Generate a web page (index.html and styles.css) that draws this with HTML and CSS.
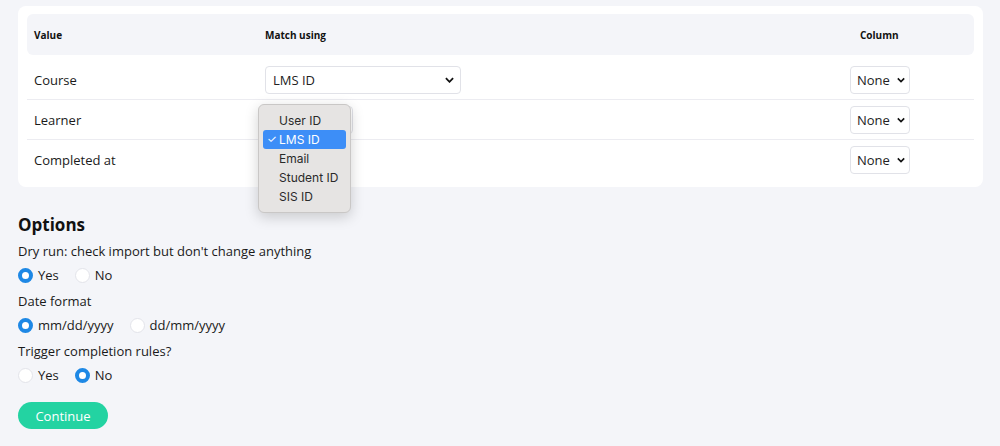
FILE: index.html
```html
<!DOCTYPE html>
<html lang="en">
  <head>
    <meta charset="UTF-8" />
    <title>Import completions</title>
    <link rel="stylesheet" href="styles.css">
  </head>
  <body>
    <div class="card">
      <div class="row head">
        <div class="cell c-value">Value</div>
        <div class="cell c-match">Match using</div>
        <div class="cell c-col">Column</div>
      </div>

      <div class="row first">
        <div class="cell c-value">Course</div>
        <div class="cell c-match">
          <span class="sel wide">
            <select><option>LMS ID</option></select>
            <svg class="chev" viewBox="0 0 10 6"><path d="M1 1l4 4 4-4" /></svg>
          </span>
        </div>
        <div class="cell c-col">
          <span class="sel small">
            <select><option>None</option></select>
            <svg class="chev" viewBox="0 0 10 6"><path d="M1 1l4 4 4-4" /></svg>
          </span>
        </div>
      </div>

      <div class="row">
        <div class="cell c-value">Learner</div>
        <div class="cell c-match">
          <span class="sel narrow">
            <select><option>LMS ID</option></select>
            <svg class="chev" viewBox="0 0 10 6"><path d="M1 1l4 4 4-4" /></svg>
          </span>
          <!-- open native popup -->
          <ul class="popup">
            <li>User ID</li>
            <li class="on"><span class="tick">&#10003;</span>LMS ID</li>
            <li>Email</li>
            <li>Student ID</li>
            <li>SIS ID</li>
          </ul>
        </div>
        <div class="cell c-col">
          <span class="sel small">
            <select><option>None</option></select>
            <svg class="chev" viewBox="0 0 10 6"><path d="M1 1l4 4 4-4" /></svg>
          </span>
        </div>
      </div>

      <div class="row last">
        <div class="cell c-value">Completed at</div>
        <div class="cell c-match"></div>
        <div class="cell c-col">
          <span class="sel small">
            <select><option>None</option></select>
            <svg class="chev" viewBox="0 0 10 6"><path d="M1 1l4 4 4-4" /></svg>
          </span>
        </div>
      </div>
    </div>

    <h2>Options</h2>

    <div class="field">
      <div class="field-label">Dry run: check import but don't change anything</div>
      <div class="radios">
        <label><input type="radio" name="dry" checked /> Yes</label>
        <label><input type="radio" name="dry" /> No</label>
      </div>
    </div>

    <div class="field">
      <div class="field-label">Date format</div>
      <div class="radios">
        <label><input type="radio" name="fmt" checked /> mm/dd/yyyy</label>
        <label><input type="radio" name="fmt" /> dd/mm/yyyy</label>
      </div>
    </div>

    <div class="field">
      <div class="field-label">Trigger completion rules?</div>
      <div class="radios">
        <label><input type="radio" name="trig" /> Yes</label>
        <label><input type="radio" name="trig" checked /> No</label>
      </div>
    </div>

    <button class="btn">Continue</button>
  </body>
</html>
```

FILE: styles.css
```css
body {
  background: #f4f5f9;
  color: #1a1a1a;
  font-family: "Open Sans", sans-serif;
  font-size: 13px;
  margin: 0;
  padding: 6px 17px 0 18px;
}
.card {
  background: #fff;
  border-radius: 8px;
  padding: 8px 9px 8px 9px;
}
.row {
  display: flex;
  align-items: center;
  height: 39px;
  border-bottom: 1px solid #ececf1;
}
.row.first {
  margin-top: 5px;
}
.row.last {
  border-bottom: none;
}
.row.head {
  height: 41px;
  background: #f4f5f9;
  border-radius: 6px;
  border-bottom: none;
  font-size: 10px;
  font-weight: 700;
  color: #111;
}
.cell {
  padding-left: 7px;
}
.c-value {
  width: 224px;
}
.c-match {
  flex: 1;
  position: relative;
  height: 100%;
  display: flex;
  align-items: center;
}
.c-col {
  width: 124px;
  padding-left: 0;
}
.head .c-col {
  padding-left: 20px;
  width: 114px;
}
.sel {
  position: relative;
  display: inline-block;
}
.sel select {
  appearance: none;
  -webkit-appearance: none;
  font-family: inherit;
  font-size: 13px;
  color: #222;
  background: #fff;
  border: 1px solid #e1e2e8;
  border-radius: 4px;
  height: 28px;
  padding: 0 7px;
  display: block;
}
.sel.wide select {
  width: 196px;
}
.sel.narrow select {
  width: 88px;
}
.sel.small select {
  width: 60px;
  padding: 0 6px;
}
.chev {
  position: absolute;
  right: 7px;
  top: 11px;
  width: 9px;
  height: 6px;
  fill: none;
  stroke: #111;
  stroke-width: 2;
  pointer-events: none;
}
.sel.small .chev {
  right: 5px;
  width: 8px;
}
.popup {
  position: absolute;
  left: 0;
  top: 4px;
  z-index: 2;
  margin: 0;
  padding: 6px 4px;
  list-style: none;
  width: 83px;
  background: #e6e4e3;
  border: 1px solid #c9c7c6;
  border-radius: 6px;
  box-shadow: 0 4px 14px rgba(0, 0, 0, 0.18);
  font-family: Inter, sans-serif;
  font-size: 12px;
  color: #2a2a2a;
}
.popup li {
  height: 19px;
  line-height: 19px;
  padding-left: 16px;
  position: relative;
  border-radius: 3px;
}
.popup li.on {
  background: #3d8ef7;
  color: #fff;
}
.tick {
  position: absolute;
  left: 4px;
  font-size: 11px;
}
h2 {
  font-size: 17px;
  font-weight: 700;
  margin: 26px 0 6px;
  color: #111;
}
.field {
  margin-bottom: 8px;
}
.field-label {
  margin-bottom: 6px;
}
.radios {
  display: flex;
  gap: 16px;
}
.radios label {
  display: flex;
  align-items: center;
  gap: 5px;
}
.radios input {
  appearance: none;
  -webkit-appearance: none;
  width: 15px;
  height: 15px;
  margin: 0;
  border-radius: 50%;
  border: 1px solid #e3e4ea;
  background: #fff;
}
.radios input:checked {
  border: 4px solid #1e88e5;
}
.btn {
  margin-top: 10px;
  background: #23d3a2;
  color: #fff;
  border: none;
  border-radius: 14px;
  height: 27px;
  width: 90px;
  font-family: inherit;
  font-size: 13px;
  cursor: pointer;
}
```
